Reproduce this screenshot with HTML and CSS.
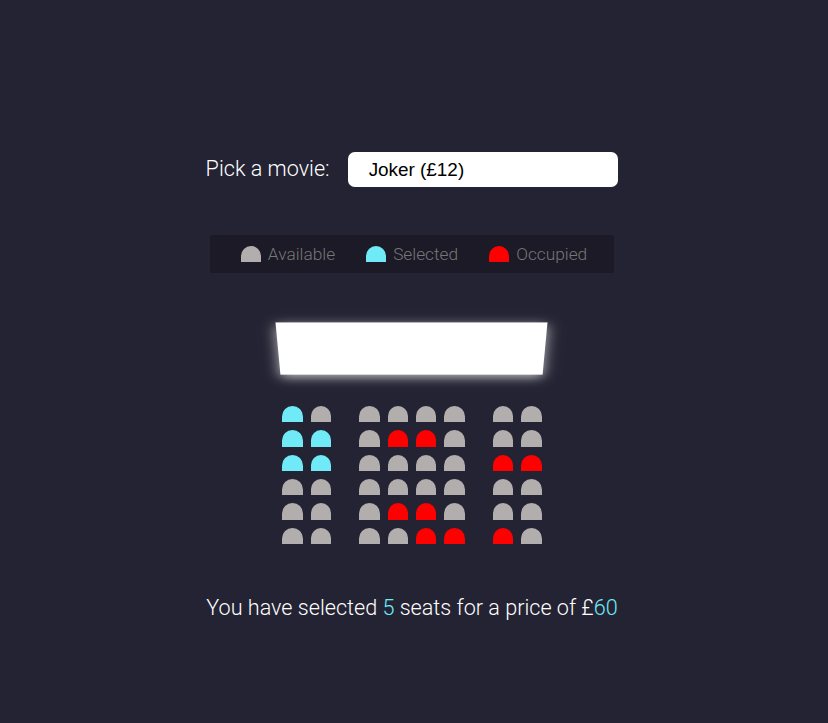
FILE: index.html
```html
<!DOCTYPE html>
<html lang="en">
<head>
<meta charset="UTF-8">
<title>Movie Seat Booking</title>
<link rel="stylesheet" href="styles.css">
</head>
<body>
  <div class="movie-container">
    <label>Pick a movie:</label>
    <select class="movie">
      <option value="10">Avengers: Endgame (£10)</option>
      <option value="12" selected>Joker (£12)</option>
      <option value="8">Toy Story 4 (£8)</option>
      <option value="9">The Lion King (£9)</option>
    </select>
  </div>

  <ul class="showcase">
    <li><div class="seat"></div><small>Available</small></li>
    <li><div class="seat selected"></div><small>Selected</small></li>
    <li><div class="seat occupied"></div><small>Occupied</small></li>
  </ul>

  <div class="container">
    <div class="screen"></div>
    <div class="row">
      <div class="seat selected"></div><div class="seat"></div>
      <div class="seat"></div><div class="seat"></div><div class="seat"></div><div class="seat"></div>
      <div class="seat"></div><div class="seat"></div>
    </div>
    <div class="row">
      <div class="seat selected"></div><div class="seat selected"></div>
      <div class="seat"></div><div class="seat occupied"></div><div class="seat occupied"></div><div class="seat"></div>
      <div class="seat"></div><div class="seat"></div>
    </div>
    <div class="row">
      <div class="seat selected"></div><div class="seat selected"></div>
      <div class="seat"></div><div class="seat"></div><div class="seat"></div><div class="seat"></div>
      <div class="seat occupied"></div><div class="seat occupied"></div>
    </div>
    <div class="row">
      <div class="seat"></div><div class="seat"></div>
      <div class="seat"></div><div class="seat"></div><div class="seat"></div><div class="seat"></div>
      <div class="seat"></div><div class="seat"></div>
    </div>
    <div class="row">
      <div class="seat"></div><div class="seat"></div>
      <div class="seat"></div><div class="seat occupied"></div><div class="seat occupied"></div><div class="seat"></div>
      <div class="seat"></div><div class="seat"></div>
    </div>
    <div class="row">
      <div class="seat"></div><div class="seat"></div>
      <div class="seat"></div><div class="seat"></div><div class="seat occupied"></div><div class="seat occupied"></div>
      <div class="seat occupied"></div><div class="seat"></div>
    </div>
  </div>

  <p class="text">You have selected <span class="count">5</span> seats for a price of £<span class="total">60</span></p>
</body>
</html>
```

FILE: styles.css
```css
* {
  box-sizing: border-box;
}

body {
  background-color: #242333;
  color: #fff;
  display: flex;
  flex-direction: column;
  align-items: center;
  justify-content: center;
  height: 100vh;
  font-family: "Roboto", "Liberation Sans", sans-serif;
  font-weight: 300;
  font-size: 21.6px;
  margin: 0;
  padding: 29px 4px 0 0;
}

.movie-container {
  margin: 27px 0;
}

.movie-container select {
  background-color: #fff;
  color: #000;
  border: 0;
  border-radius: 6.75px;
  font-family: "Liberation Sans", Arial, sans-serif;
  font-weight: 400;
  font-size: 18.9px;
  margin-left: 13.5px;
  padding: 6.75px 20.25px;
  width: 270px;
  -webkit-appearance: none;
  appearance: none;
}

.container {
  perspective: 1350px;
  margin-bottom: 40.5px;
}

.seat {
  background-color: #b3aeae;
  height: 16.2px;
  width: 20.25px;
  margin: 4.05px;
  border-top-left-radius: 13.5px;
  border-top-right-radius: 13.5px;
}

.seat.selected {
  background-color: #6feaf6;
}

.seat.occupied {
  background-color: #ff0000;
}

.row .seat:nth-of-type(2) {
  margin-right: 24.3px;
}

.row .seat:nth-last-of-type(2) {
  margin-left: 24.3px;
}

.showcase {
  background: rgba(0, 0, 0, 0.25);
  padding: 6.75px 13.5px;
  margin: 21.6px 0;
  border-radius: 2px;
  color: #777;
  list-style-type: none;
  display: flex;
  justify-content: space-between;
}

.showcase li {
  display: flex;
  align-items: center;
  justify-content: center;
  margin: 0 13.5px;
}

.showcase li small {
  margin-left: 2.7px;
  font-size: 17.3px;
}

.row {
  display: flex;
}

.screen {
  background-color: #fff;
  height: 70px;
  width: 100%;
  margin: 19.25px 0 18.25px;
  transform: rotateX(-45deg);
  box-shadow: 0 4px 13.5px rgba(255, 255, 255, 0.7);
}

p.text {
  margin: 6.75px 0;
}

p.text span {
  color: #6feaf6;
}
```
